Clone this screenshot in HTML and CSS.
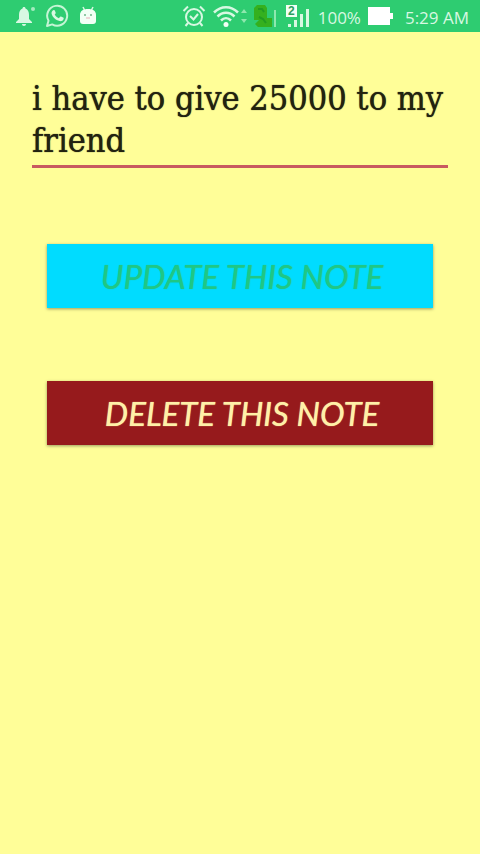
FILE: index.html
```html
<!DOCTYPE html>
<html lang="en">
<head>
    <meta charset="UTF-8">
    <meta name="viewport" content="width=device-width, initial-scale=1.0">
    <title>Edit Note</title>
    <link rel="stylesheet" href="styles.css">
</head>
<body>
    <header class="status-bar">
        <div class="notifications">
            <svg width="22" height="22" viewBox="0 0 22 22" fill="#d8f8e2">
                <path d="M9 2c1 0 1.500.7 1.500 1.600C13 4.500 14 7 14 10v4l3 3v1H1v-1l3-3v-4c0-3 1-5.500 3.500-6.400C7.500 2.700 8 2 9 2zM7 19h4c0 1.200-.8 2-2 2s-2-.8-2-2z"/>
                <circle cx="18" cy="4" r="2" opacity=".7"/>
            </svg>
            <svg width="24" height="24" viewBox="0 0 24 24">
                <path d="M2 22l1.500-5.300a10 10 0 1 1 3.700 3.700z" fill="none" stroke="#c5f5d5" stroke-width="2" stroke-linejoin="round"/>
                <path d="M8.300 6.300c.8-.5 1.300-.3 1.600.5l.8 1.900c.2.600-.6 1.300-1 1.700 1 1.800 2.300 3 4.100 3.800l1.400-1.500c.4-.4.8-.2 1.300 0l1.700.9c.6.300.6.700.4 1.400-.6 1.700-2.300 2.500-4 2.100-4.100-.9-7.100-3.900-8-7.300-.3-1.500.5-2.900 1.700-3.500z" fill="#d8f8e2"/>
            </svg>
            <svg width="22" height="22" viewBox="0 0 22 22">
                <path d="M6 2l2 4M16 2l-2 4" stroke="#d8f8e2" stroke-width="1.500"/>
                <path d="M3 10c0-4 3-6 8-6s8 2 8 6v6c0 2-1 3-3 3H6c-2 0-3-1-3-3z" fill="#f2fff5"/>
                <circle cx="8" cy="10" r="1" fill="#70b58a"/>
                <circle cx="14" cy="10" r="1" fill="#70b58a"/>
                <path d="M9 13h4" stroke="#edc8cd" stroke-width="1.500"/>
            </svg>
        </div>
        <div class="system">
            <svg width="24" height="24" viewBox="0 0 24 24" fill="none" stroke="#d8f8e2" stroke-width="2">
                <circle cx="12" cy="13" r="8"/>
                <path d="M1.500 7L6 2.500M18 2.500L22.500 7M6 19l-2.500 3M18 19l2.500 3M8 12l3.500 3.500L16 10"/>
            </svg>
            <svg width="34" height="24" viewBox="0 0 34 24" fill="none" stroke="#d8f8e2" stroke-width="2.500">
                <path d="M1 8.500c7-7 17-7 24 0M4.500 12.500c5-5 12-5 17 0M8 16.500c3-3 7-3 10 0"/>
                <circle cx="13" cy="20.500" r="2.500" fill="#f2fff5" stroke="none"/>
                <path d="M28 9l3-4 3 4zM28 15l3 4 3-4z" fill="#8ee8ae" stroke="none"/>
            </svg>
            <svg width="24" height="24" viewBox="0 0 24 24">
                <path d="M0 4l3-3h8l2 3v10h5v9H4l-3-3 4-4H0z" fill="#35b01e"/>
                <path d="M4 5h4l2 3M5 13l4 2 3 4" fill="none" stroke="#209c22" stroke-width="2"/>
                <path d="M21 6v17" stroke="#8ee8ae" stroke-width="2"/>
            </svg>
            <svg width="26" height="26" viewBox="0 0 26 26" fill="#d8f8e2">
                <path d="M1 2h11v12H1z" fill="#f2fff5"/>
                <text class="sim" x="3" y="12">2</text>
                <path d="M3 21h3v3H3zM9 17h3v7H9zM15 11h3v13h-3zM21 6h3v18h-3z"/>
            </svg>
            <span class="battery-level">100%</span>
            <svg width="26" height="18" viewBox="0 0 26 18" fill="#ffffff">
                <path d="M0 0h22v6h3v6h-3v6H0z"/>
            </svg>
            <time class="clock">5:29 AM</time>
        </div>
    </header>
    <main class="note">
        <textarea class="note-text" rows="2" aria-label="Note" spellcheck="false">i have to give 25000 to my friend</textarea>
        <button class="note-button update" type="button">UPDATE THIS NOTE</button>
        <button class="note-button delete" type="button">DELETE THIS NOTE</button>
    </main>
</body>
</html>
```

FILE: styles.css
```css
* {
    box-sizing: border-box;
}
body {
    margin: 0;
    background-color: #fffe98;
    font-family: "Open Sans", "Noto Sans", sans-serif;
}
.status-bar {
    display: flex;
    justify-content: space-between;
    align-items: center;
    height: 32px;
    padding: 0 11px 0 15px;
    background-color: #2ecc71;
    color: #d8f8e2;
}
.notifications,
.system {
    display: flex;
    align-items: center;
}
.notifications {
    gap: 8px;
}
.system {
    gap: 7px;
}
.sim {
    fill: #2b9e5c;
    font-family: "Liberation Sans", sans-serif;
    font-size: 12px;
    font-weight: bold;
}
.battery-level,
.clock {
    font-size: 17px;
    line-height: 24px;
    padding-top: 3px;
    white-space: nowrap;
}
.clock {
    margin-left: 4px;
}
.note {
    display: flex;
    flex-direction: column;
    padding: 45px 32px;
}
.note-text {
    display: block;
    width: 100%;
    margin: 0 0 76px;
    padding: 0 0 4px;
    border: none;
    border-bottom: 3px solid #c85a60;
    outline: none;
    resize: none;
    overflow: hidden;
    background-color: transparent;
    color: #222210;
    font-family: "DejaVu Serif Condensed", "DejaVu Serif", serif;
    font-size: 34px;
    line-height: 42px;
    text-shadow: 0 0 1px #222210;
}
.note-button {
    height: 64px;
    margin: 0 15px 73px;
    padding: 0 0 0 4px;
    border: none;
    box-shadow: 0 1px 3px rgba(0, 0, 0, 0.4);
    font-family: Lato, sans-serif;
    font-size: 33px;
    font-style: italic;
    line-height: 40px;
    text-shadow: 0 0 1px currentColor;
    cursor: pointer;
}
.update {
    background-color: #00dcff;
    color: #1fc785;
}
.delete {
    background-color: #961a1c;
    color: #fff0a8;
}
```
